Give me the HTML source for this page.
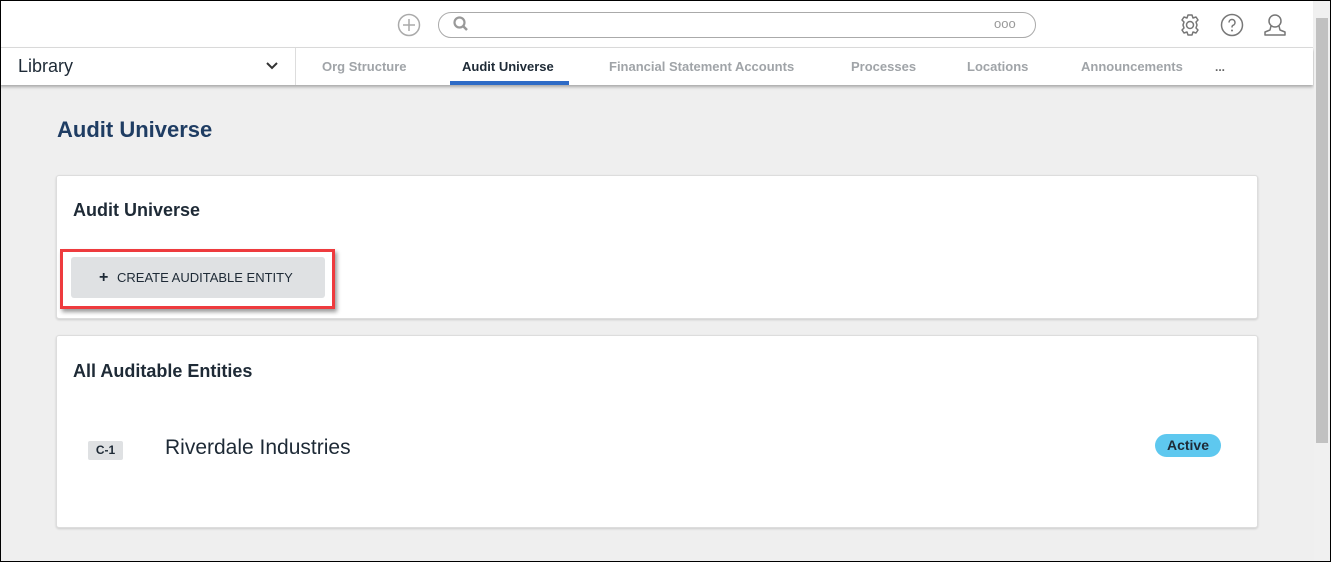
<!DOCTYPE html>
<html><head><style>
*{margin:0;padding:0;box-sizing:border-box}
body{width:1331px;height:562px;overflow:hidden;background:#efefef;font-family:"Liberation Sans",sans-serif;position:relative}
.frame{position:absolute;left:0;top:0;width:1331px;height:562px;border:1px solid #000;pointer-events:none;z-index:10}
.top{position:absolute;left:0;top:0;width:1313px;height:48px;background:#fff;border-bottom:1px solid #ddd}
.nav{position:absolute;left:0;top:48px;width:1313px;height:37px;background:#fff;box-shadow:0 2px 3px rgba(0,0,0,.3)}
.nav span{position:absolute;top:11px;font-size:13px;color:#a0a4a8;font-weight:bold}
.sb{position:absolute;right:1px;top:1px;width:16px;height:560px;background:#f0f0f0}
.sb div{position:absolute;left:2px;top:17px;width:12px;height:425px;background:#c1c1c1}
.card{position:absolute;left:56px;width:1202px;background:#fff;border:1px solid #ddd;border-radius:3px;box-shadow:0 1px 2px rgba(0,0,0,.15)}
.h{position:absolute;left:16px;font-size:18px;font-weight:bold;color:#1e2a36}
</style></head><body>
<div class="top">
<svg style="position:absolute;left:397px;top:13px" width="24" height="24"><circle cx="12" cy="12" r="10.5" fill="none" stroke="#aaa" stroke-width="1.5"/><path d="M12 6v12M6 12h12" stroke="#aaa" stroke-width="1.5"/></svg>
<div style="position:absolute;left:438px;top:12px;width:598px;height:26px;border:1px solid #aaa;border-radius:13px"></div>
<svg style="position:absolute;left:452px;top:15px" width="18" height="18"><circle cx="7.5" cy="7.5" r="5" fill="none" stroke="#999" stroke-width="2.2"/><path d="M11 11l4 4" stroke="#999" stroke-width="2.5"/></svg>
<div style="position:absolute;left:994px;top:16px;font-size:13px;color:#999">ooo</div>
<svg style="position:absolute;left:1178px;top:13px" width="24" height="24"><circle cx="12" cy="12" r="3.5" fill="none" stroke="#777" stroke-width="1.5"/><path d="M10 2h4l1 3 3-1 2 3-2 2 1 3-1 3 2 2-2 3-3-1-1 3h-4l-1-3-3 1-2-3 2-2-1-3 1-3-2-2 2-3 3 1z" fill="none" stroke="#777" stroke-width="1.5" stroke-linejoin="round"/></svg>
<svg style="position:absolute;left:1220px;top:13px" width="24" height="24"><circle cx="12" cy="12" r="10.5" fill="none" stroke="#777" stroke-width="1.5"/><path d="M9 9.5a3 3 0 1 1 4 2.8c-1 .4-1 1-1 2.2" fill="none" stroke="#777" stroke-width="1.5"/><circle cx="12" cy="17.5" r="1" fill="#777"/></svg>
<svg style="position:absolute;left:1262px;top:12px" width="26" height="26"><circle cx="13" cy="9" r="6" fill="none" stroke="#777" stroke-width="1.5"/><path d="M9 14l-1 4-5 2v3h20v-3l-5-2-1-4" fill="none" stroke="#777" stroke-width="1.5" stroke-linejoin="round"/></svg>
</div>
<div class="nav">
<div style="position:absolute;left:18px;top:8px;font-size:18px;color:#1e2a36">Library</div>
<svg style="position:absolute;left:266px;top:13px" width="12" height="10"><path d="M1 2l5 5 5-5" fill="none" stroke="#333" stroke-width="2"/></svg>
<div style="position:absolute;left:295px;top:0;width:1px;height:37px;background:#ddd"></div>
<span style="left:322px">Org Structure</span>
<span style="left:462px;color:#1e2a36">Audit Universe</span>
<div style="position:absolute;left:450px;top:33px;width:119px;height:4px;background:#2e6bc6"></div>
<span style="left:609px">Financial Statement Accounts</span>
<span style="left:851px">Processes</span>
<span style="left:967px">Locations</span>
<span style="left:1081px">Announcements</span>
<span style="left:1215px;top:12px;font-size:12px;color:#666">...</span>
</div>
<div style="position:absolute;left:57px;top:117px;font-size:22px;color:#1f3d63;font-weight:bold">Audit Universe</div>
<div class="card" style="top:175px;height:144px">
<div class="h" style="top:24px">Audit Universe</div>
<div style="position:absolute;left:3px;top:73px;width:275px;height:60px;border:3px solid #ee3b3e;box-shadow:2px 3px 4px rgba(0,0,0,.4)"></div>
<div style="position:absolute;left:14px;top:81px;width:254px;height:41px;background:#dfe1e3;border-radius:3px;font-size:13px;color:#1e2a36;line-height:41px"><b style="position:absolute;left:28px;font-size:16px">+</b><span style="position:absolute;left:46px">CREATE AUDITABLE ENTITY</span></div>
</div>
<div class="card" style="top:335px;height:193px">
<div class="h" style="top:25px">All Auditable Entities</div>
<div style="position:absolute;left:31px;top:105px;width:35px;height:19px;background:#dfe1e3;border-radius:2px;font-size:12px;font-weight:bold;text-align:center;line-height:19px;color:#1e2a36">C-1</div>
<div style="position:absolute;left:108px;top:100px;font-size:21px;color:#1e2a36">Riverdale Industries</div>
<div style="position:absolute;left:1098px;top:98px;width:66px;height:23px;background:#5ec8ef;border-radius:12px;font-size:14px;font-weight:bold;color:#1e2a36;text-align:center;line-height:23px">Active</div>
</div>
<div class="sb"><div></div></div>
<div class="frame"></div>
</body></html>
